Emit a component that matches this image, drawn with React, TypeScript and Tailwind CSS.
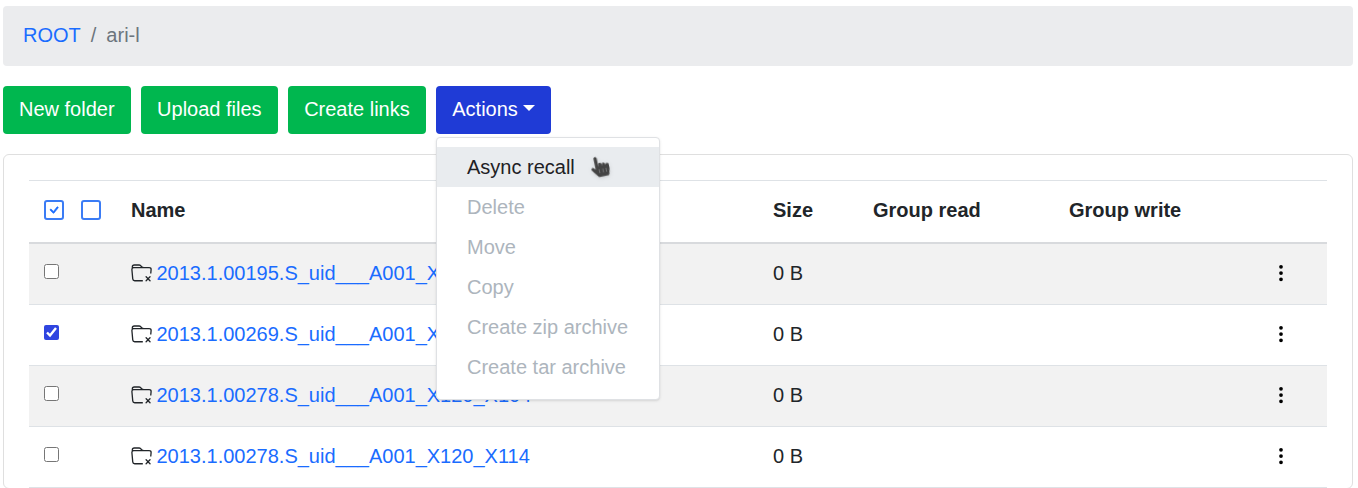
import React from "react";
import { BsFolderX, BsThreeDotsVertical, BsCheck } from "react-icons/bs";
import { FaHandPointer } from "react-icons/fa";

const rows = [
  { name: "2013.1.00195.S_uid___A001_X122_X1f1", checked: false },
  { name: "2013.1.00269.S_uid___A001_X122_X1f5", checked: true },
  { name: "2013.1.00278.S_uid___A001_X120_X104", checked: false },
  { name: "2013.1.00278.S_uid___A001_X120_X114", checked: false },
];

const menu = ["Delete", "Move", "Copy", "Create zip archive", "Create tar archive"];

const columns = "grid grid-cols-[102px_642px_100px_196px_1fr] items-center";

function Button({ label }: { label: string }) {
  return (
    <button className="h-12 rounded bg-[#00b74f] px-4 pb-[2px] text-white">{label}</button>
  );
}

function HeaderCheck({ checked }: { checked?: boolean }) {
  return (
    <span className="flex h-5 w-5 items-center justify-center rounded-[3px] border-2 border-[#3b7cf5] text-[#1a6cff]">
      {checked ? <BsCheck className="h-5 w-5 stroke-current stroke-[0.6]" /> : null}
    </span>
  );
}

export default function App() {
  return (
    <div className="h-[488px] overflow-hidden bg-white pt-[6px] pr-[5px] pl-[3px] font-['Liberation_Sans',Arial,sans-serif] text-[20px] text-[#212529]">
      <nav className="flex h-[60px] items-center gap-[10px] rounded bg-[#ebecee] px-5 pb-[2px]">
        <a className="text-[#1a6cff]">ROOT</a>
        <span className="text-[#6c757d]">/</span>
        <span className="text-[#6c757d]">ari-l</span>
      </nav>

      <div className="relative mt-5 flex gap-[10.5px]">
        <Button label="New folder" />
        <Button label="Upload files" />
        <Button label="Create links" />
        <button className="flex h-12 items-center gap-[5px] rounded bg-[#1f3bd6] px-4 pb-[2px] text-white">
          Actions
          <span className="mb-[2px] h-0 w-0 border-x-[6px] border-t-[6px] border-x-transparent border-t-white" />
        </button>

        <div className="absolute top-[51px] left-[433px] z-10 h-[263px] w-[224px] rounded border border-[#dfe1e4] bg-white py-[9px] shadow-sm">
          <div className="relative flex h-10 items-center bg-[#e9ecef] pl-[30px] text-[#1e2125]">
            Async recall
            <FaHandPointer className="absolute top-[9px] left-[154px] h-[21px] w-[18px] -rotate-12 text-[#444444] drop-shadow" />
          </div>
          {menu.map((item) => (
            <div key={item} className="flex h-10 items-center pl-[30px] text-[#adb5bd]">
              {item}
            </div>
          ))}
        </div>
      </div>

      <div className="mt-5 rounded-[6px] border border-[#dfdfdf] px-[25px] pt-[25px]">
        <div className={`${columns} h-[64px] border-t border-b-2 border-t-[#dee2e6] border-b-[#d8dadd] pb-[3px] font-bold`}>
          <div className="flex gap-[17px] pl-[15px]">
            <HeaderCheck checked />
            <HeaderCheck />
          </div>
          <div>Name</div>
          <div>Size</div>
          <div>Group read</div>
          <div>Group write</div>
        </div>
        {rows.map((row, i) => (
          <div
            key={row.name}
            className={`${columns} h-[61px] border-b border-[#dee2e6] pb-[2px] ${i % 2 === 0 ? "bg-[#f2f2f2]" : "bg-white"}`}
          >
            <div className="flex pb-1 pl-[15px]">
              <input
                type="checkbox"
                defaultChecked={row.checked}
                className="m-0 h-[15px] w-[15px] accent-[#2f45e0]"
              />
            </div>
            <div className="flex items-center gap-[4.5px]">
              <BsFolderX className="h-[21px] w-[21px] text-[#212529]" />
              <a className="text-[#1a6cff]">{row.name}</a>
            </div>
            <div>0 B</div>
            <div />
            <div className="flex justify-end pr-[36px]">
              <BsThreeDotsVertical className="h-5 w-5 text-black" />
            </div>
          </div>
        ))}
      </div>
    </div>
  );
}
